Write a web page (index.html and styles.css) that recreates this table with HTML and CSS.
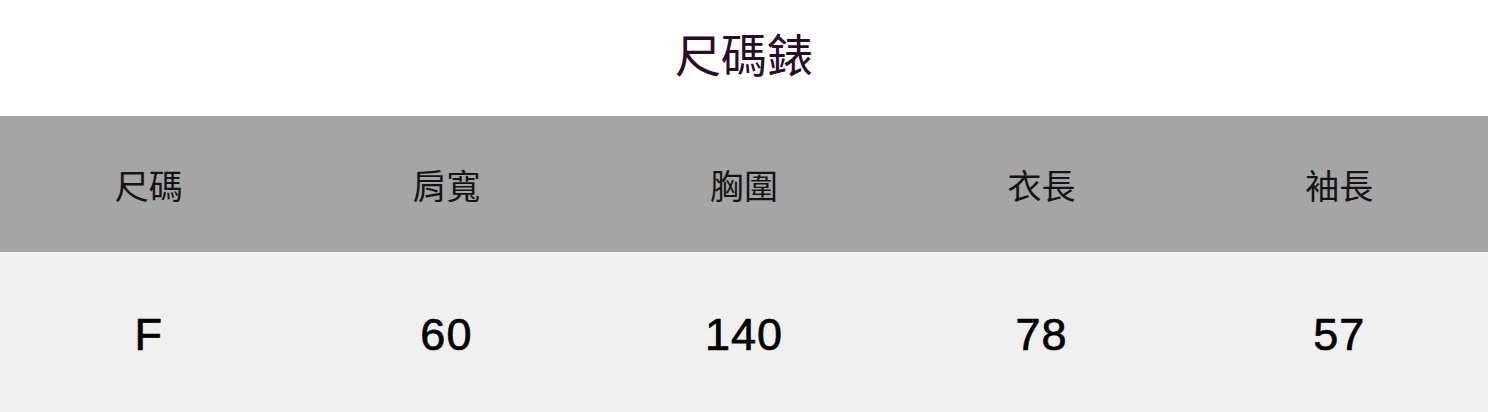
FILE: index.html
```html
<!DOCTYPE html>
<html lang="zh-Hant">
<head>
<meta charset="utf-8">
<link rel="stylesheet" href="styles.css">
</head>
<body>
<div class="page">
  <h1 class="title">尺碼錶</h1>
  <div class="row head">
    <div class="cell">尺碼</div>
    <div class="cell">肩寬</div>
    <div class="cell">胸圍</div>
    <div class="cell">衣長</div>
    <div class="cell">袖長</div>
  </div>
  <div class="row body">
    <div class="cell">F</div>
    <div class="cell">60</div>
    <div class="cell">140</div>
    <div class="cell">78</div>
    <div class="cell">57</div>
  </div>
</div>
</body>
</html>
```
FILE: styles.css
```css
html, body {
  margin: 0;
  padding: 0;
  background: #ffffff;
}
.page {
  width: 1488px;
  height: 412px;
  overflow: hidden;
  font-family: "Noto Sans CJK TC", "Noto Sans CJK SC", sans-serif;
}
.title {
  margin: 0;
  height: 116px;
  box-sizing: border-box;
  padding-bottom: 12px;
  display: flex;
  align-items: center;
  justify-content: center;
  font-size: 46px;
  font-weight: 400;
  color: #2a0c2a;
}
.row {
  display: grid;
  grid-template-columns: repeat(5, 1fr);
}
.cell {
  display: flex;
  align-items: center;
  justify-content: center;
}
.head {
  height: 136px;
  background: #a5a5a5;
  color: #141414;
  font-size: 34px;
}
.body {
  height: 160px;
  background: #f0f0f0;
  color: #000000;
  font-family: "Liberation Sans", Arial, sans-serif;
  font-size: 45px;
  letter-spacing: 1px;
  -webkit-text-stroke: 0.7px #000;
  box-sizing: border-box;
  padding-bottom: 8px;
}
.body .cell {
  padding-top: 14px;
}
```
